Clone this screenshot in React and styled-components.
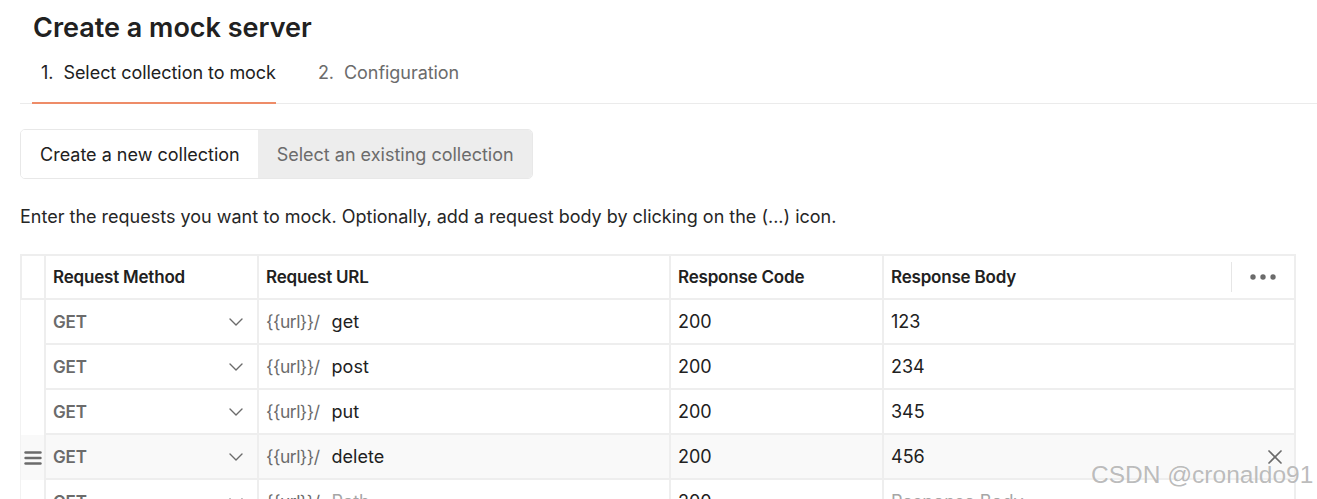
import styled, { createGlobalStyle } from 'styled-components';
import { ChevronDown } from 'lucide-react';

const GlobalStyle = createGlobalStyle`
  html, body {
    margin: 0;
    padding: 0;
    background: #ffffff;
  }
  body {
    font-family: Inter, 'Noto Sans', sans-serif;
    color: #212121;
  }
`;

const rows = [
  { method: 'GET', path: 'get', code: '200', body: '123' },
  { method: 'GET', path: 'post', code: '200', body: '234' },
  { method: 'GET', path: 'put', code: '200', body: '345' },
  { method: 'GET', path: 'delete', code: '200', body: '456', hovered: true },
  { method: 'GET', path: '', code: '200', body: '', placeholder: true },
];

const DragIcon = () => (
  <svg width="18" height="14" viewBox="0 0 18 14">
    <g stroke="#6b6b6b" strokeWidth="2.4" strokeLinecap="round">
      <line x1="1.5" y1="1.5" x2="16.5" y2="1.5" />
      <line x1="1.5" y1="7" x2="16.5" y2="7" />
      <line x1="1.5" y1="12.5" x2="16.5" y2="12.5" />
    </g>
  </svg>
);

const CloseIcon = () => (
  <svg width="16" height="16" viewBox="0 0 16 16">
    <g stroke="#6b6b6b" strokeWidth="1.7" strokeLinecap="round">
      <line x1="2" y1="2" x2="14" y2="14" />
      <line x1="14" y1="2" x2="2" y2="14" />
    </g>
  </svg>
);

const MoreIcon = () => (
  <svg width="26" height="6" viewBox="0 0 26 6">
    <g fill="#6b6b6b">
      <circle cx="3" cy="3" r="2.7" />
      <circle cx="13" cy="3" r="2.7" />
      <circle cx="23" cy="3" r="2.7" />
    </g>
  </svg>
);

const App = () => {
  return (
    <Page>
      <GlobalStyle />
      <Title>Create a mock server</Title>

      <TabBar>
        <Tab $active>1.&nbsp; Select collection to mock</Tab>
        <Tab>2.&nbsp; Configuration</Tab>
      </TabBar>

      <Segmented>
        <Segment $active>Create a new collection</Segment>
        <Segment>Select an existing collection</Segment>
      </Segmented>

      <Description>
        Enter the requests you want to mock. Optionally, add a request body by clicking on the (...) icon.
      </Description>

      <Table>
        <HeaderRow>
          <DragHeader />
          <HeaderCell>Request Method</HeaderCell>
          <HeaderCell>Request URL</HeaderCell>
          <HeaderCell>Response Code</HeaderCell>
          <HeaderCell $last>
            <span>Response Body</span>
            <Actions>
              <MoreIcon />
            </Actions>
          </HeaderCell>
        </HeaderRow>

        {rows.map((row, i) => (
          <Row key={i}>
            <DragCell $hovered={row.hovered}>{row.hovered && <DragIcon />}</DragCell>
            <MethodCell $hovered={row.hovered}>
              <MethodText>{row.method}</MethodText>
              <ChevronDown size={24} strokeWidth={1.4} color="#6b6b6b" />
            </MethodCell>
            <Cell $hovered={row.hovered}>
              <UrlPrefix>{'{{url}}/'}</UrlPrefix>
              {row.placeholder ? <Placeholder>Path</Placeholder> : <span>{row.path}</span>}
            </Cell>
            <Cell $hovered={row.hovered}>{row.code}</Cell>
            <Cell $hovered={row.hovered} $last>
              {row.placeholder ? <Placeholder>Response Body</Placeholder> : <span>{row.body}</span>}
              {row.hovered && (
                <RemoveButton>
                  <CloseIcon />
                </RemoveButton>
              )}
            </Cell>
          </Row>
        ))}
      </Table>

      <Watermark>CSDN @cronaldo91</Watermark>
    </Page>
  );
};

export default App;

const Page = styled.div`
  position: relative;
  height: 499px;
  overflow: hidden;
  padding: 0 21px 0 20px;
  box-sizing: border-box;
`;

const Title = styled.h1`
  margin: 12px 0 0 13px;
  font-size: 27px;
  line-height: 32px;
  font-weight: 600;
  color: #212121;
`;

const TabBar = styled.div`
  display: flex;
  gap: 33px;
  margin-right: -21px;
  padding-left: 12px;
  border-bottom: 1px solid #ebebeb;
`;

const Tab = styled.div`
  padding: 19px 0 19px 9px;
  margin-bottom: -1px;
  font-size: 18px;
  line-height: 20px;
  letter-spacing: -0.05px;
  color: ${(p) => (p.$active ? '#212121' : '#6b6b6b')};
  border-bottom: 2px solid ${(p) => (p.$active ? '#ee8c68' : 'transparent')};
`;

const Segmented = styled.div`
  display: flex;
  width: fit-content;
  margin-top: 25px;
  border: 1px solid #e8e8e8;
  border-radius: 5px;
  overflow: hidden;
`;

const Segment = styled.div`
  height: 48px;
  padding: 0 18px 0 19px;
  display: flex;
  align-items: center;
  font-size: 18px;
  background: ${(p) => (p.$active ? '#ffffff' : '#ededed')};
  color: ${(p) => (p.$active ? '#212121' : '#6b6b6b')};
`;

const Description = styled.p`
  margin: 28px 0 0;
  font-size: 18px;
  line-height: 20px;
  color: #262626;
`;

const Table = styled.div`
  margin-top: 27px;
  width: 1276px;
  border-top: 2px solid #eeeeee;
`;

const columns = '24px 213px 412px 213px 414px';

const HeaderRow = styled.div`
  display: grid;
  grid-template-columns: ${columns};
  height: 44px;
`;

const Row = styled.div`
  display: grid;
  grid-template-columns: ${columns};
  height: 45px;
`;

const DragHeader = styled.div`
  border-left: 2px solid #eeeeee;
  border-bottom: 2px solid #eeeeee;
`;

const DragCell = styled.div`
  display: flex;
  align-items: center;
  justify-content: center;
  border-left: 1px solid #f2f2f2;
  padding-left: 1px;
  background: ${(p) => (p.$hovered ? '#f9f9f9' : '#ffffff')};
`;

const HeaderCell = styled.div`
  display: flex;
  align-items: center;
  justify-content: space-between;
  padding-left: 7px;
  border-left: 2px solid #eeeeee;
  border-bottom: 2px solid #eeeeee;
  border-right: ${(p) => (p.$last ? '2px solid #eeeeee' : '0')};
  font-size: 17px;
  letter-spacing: -0.2px;
  font-weight: 600;
  color: #212121;
`;

const Actions = styled.div`
  width: 62px;
  height: 30px;
  border-left: 1px solid #e6e6e6;
  display: flex;
  align-items: center;
  justify-content: center;
`;

const Cell = styled.div`
  display: flex;
  align-items: center;
  justify-content: ${(p) => (p.$last ? 'space-between' : 'flex-start')};
  padding: 0 9px 0 7px;
  border-left: 2px solid #eeeeee;
  border-bottom: 2px solid #eeeeee;
  border-right: ${(p) => (p.$last ? '2px solid #eeeeee' : '0')};
  background: ${(p) => (p.$hovered ? '#f9f9f9' : '#ffffff')};
  font-size: 18px;
  color: #212121;
`;

const MethodCell = styled(Cell)`
  justify-content: space-between;
`;

const MethodText = styled.span`
  font-size: 17px;
  letter-spacing: -0.2px;
  font-weight: 600;
  color: #6b6b6b;
`;

const UrlPrefix = styled.span`
  font-size: 17.5px;
  letter-spacing: -0.5px;
  color: #6b6b6b;
  margin-right: 12px;
`;

const Placeholder = styled.span`
  color: #a6a6a6;
`;

const RemoveButton = styled.div`
  display: flex;
  align-items: center;
  margin-right: 2px;
`;

const Watermark = styled.div`
  position: absolute;
  left: 1091px;
  top: 461px;
  font-family: 'Liberation Sans', Arial, sans-serif;
  font-size: 24.5px;
  color: rgba(130, 130, 130, 0.55);
  text-shadow: 0 0 1px rgba(255, 255, 255, 0.9);
  white-space: nowrap;
  pointer-events: none;
`;
